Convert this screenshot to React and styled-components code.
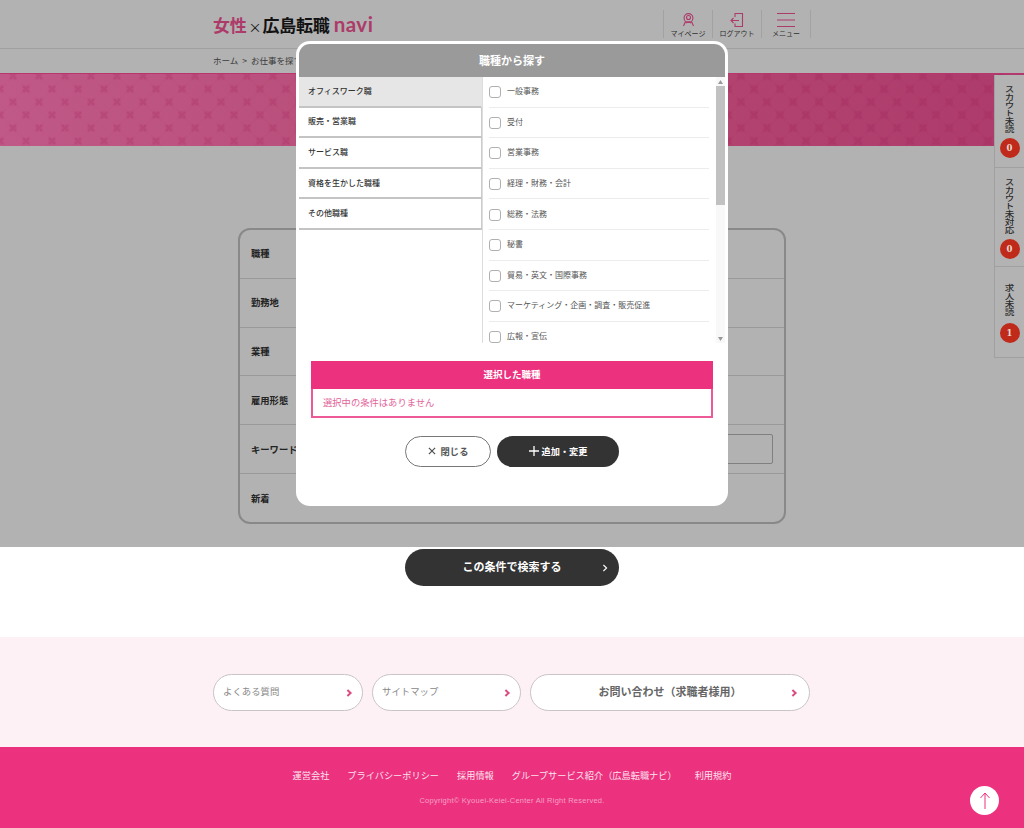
import React from "react";
import styled, { createGlobalStyle } from "styled-components";

const Global = createGlobalStyle`
  html, body { margin: 0; padding: 0; background: #fff; }
  body { font-family: "Noto Sans CJK JP", "Noto Sans", sans-serif; color: #333; }
  * { box-sizing: border-box; }
`;

const Page = styled.div`
  position: relative;
  width: 1024px;
  height: 828px;
  overflow: hidden;
  display: flex;
  flex-direction: column;
`;
const Header = styled.header`
  height: 49px;
  border-bottom: 1px solid #e5e5e5;
  flex: none;
`;
const HeaderInner = styled.div`
  width: 598px;
  height: 48px;
  margin: 0 auto;
  display: flex;
  align-items: center;
  justify-content: space-between;
`;
const Logo = styled.div`
  display: flex;
  align-items: baseline;
  font-weight: 700;
  font-size: 17px;
  letter-spacing: -0.2px;
  color: #1a1a1a;
  margin-top: 1px;
`;
const LogoPink = styled.span`
  color: #f85598;
  font-weight: 700;
`;
const LogoX = styled.span`
  font-weight: 400;
  font-size: 13px;
  margin: 0 1px 0 2px;
`;
const LogoNavi = styled.span`
  color: #f85598;
  font-family: "Lato", sans-serif;
  font-size: 20.5px;
  font-weight: 700;
  letter-spacing: 0.5px;
  margin-left: 4px;
  line-height: 1;
`;
const Nav = styled.nav`
  display: flex;
  height: 28px;
`;
const NavItem = styled.div`
  width: 49px;
  height: 28px;
  border-left: 1px solid #e8e8e8;
  display: flex;
  flex-direction: column;
  align-items: center;
  justify-content: space-between;
  padding-top: 3px;
  font-size: 7px;
  line-height: 9px;
  color: #444;
  &:last-child {
    border-right: 1px solid #e8e8e8;
    width: 50px;
  }
`;
const Crumb = styled.div`
  height: 24px;
  width: 598px;
  margin: 0 auto;
  flex: none;
  display: flex;
  align-items: center;
  gap: 4px;
  font-size: 8.5px;
  color: #555;
  padding-bottom: 2px;
`;
const Hero = styled.div`
  position: relative;
  z-index: 1;
  flex: none;
  height: 73px;
  background: linear-gradient(90deg, #bf5686 0%, #b4456f 50%, #ab3769 100%);
  border-top: 1px solid #b8356e;
  overflow: hidden;
`;
const HeroArt = styled.svg`
  display: block;
  width: 100%;
  height: 100%;
`;
const Main = styled.main`
  flex: none;
  height: 491px;
  display: flex;
  flex-direction: column;
  align-items: center;
  padding-top: 82px;
`;
const FormTable = styled.div`
  width: 548px;
  height: 296px;
  border: 2px solid #c4c4c4;
  border-radius: 12px;
  display: flex;
  flex-direction: column;
  overflow: hidden;
`;
const FormRow = styled.div`
  flex: 1;
  display: flex;
  align-items: center;
  justify-content: space-between;
  padding: 0 11px 1px;
  font-size: 9.3px;
  font-weight: 700;
  color: #333;
  & + & {
    border-top: 1px solid #dcdcdc;
  }
`;
const KeywordInput = styled.div`
  width: 340px;
  height: 30px;
  border: 1px solid #b8b8b8;
  border-radius: 2px;
`;
const SearchButton = styled.div`
  width: 214px;
  height: 37px;
  margin-top: 25px;
  border-radius: 19px;
  background: #333;
  color: #fff;
  font-size: 11px;
  font-weight: 700;
  display: flex;
  align-items: center;
  justify-content: center;
  position: relative;
  padding-bottom: 4px;
`;
const ChevronSlot = styled.span`
  position: absolute;
  right: ${(p) => p.$right || 9}px;
  top: 50%;
  transform: translateY(-50%);
  display: flex;
`;
const LinkBand = styled.section`
  flex: none;
  height: 110px;
  background: #fdf1f6;
  display: flex;
  justify-content: center;
  align-items: flex-start;
  gap: 9px;
  padding: 37px 1px 0 0;
`;
const LinkPill = styled.div`
  position: relative;
  width: ${(p) => p.$w}px;
  height: 37px;
  background: #fff;
  border: 1px solid #c9c4c7;
  border-radius: 19px;
  display: flex;
  align-items: center;
  justify-content: ${(p) => (p.$center ? "center" : "flex-start")};
  padding: 0 ${(p) => (p.$center ? "0" : "9px")} 3px;
  font-size: ${(p) => (p.$center ? "11px" : "9.4px")};
  font-weight: ${(p) => (p.$center ? 700 : 400)};
  color: ${(p) => (p.$center ? "#666" : "#888")};
`;
const Footer = styled.footer`
  flex: 1;
  position: relative;
  background: #ec317f;
  display: flex;
  flex-direction: column;
  align-items: center;
`;
const FooterLinks = styled.div`
  display: flex;
  gap: 18px;
  margin-top: 21px;
  font-size: 9.2px;
  line-height: 14px;
  color: #fbe3ee;
`;
const Copy = styled.div`
  margin-top: 14px;
  font-family: "Liberation Sans", sans-serif;
  font-size: 7.5px;
  line-height: 10px;
  color: #f6a0c5;
  letter-spacing: 0.25px;
`;
const TopButton = styled.div`
  position: absolute;
  right: 25px;
  top: 39px;
  width: 29px;
  height: 29px;
  border-radius: 50%;
  background: #fff;
  display: flex;
  align-items: center;
  justify-content: center;
`;
const Overlay = styled.div`
  position: absolute;
  left: 0;
  top: 0;
  width: 100%;
  height: 547px;
  background: rgba(0, 0, 0, 0.3);
`;
const Modal = styled.div`
  position: absolute;
  z-index: 20;
  left: 296px;
  top: 41px;
  width: 432px;
  height: 465px;
  background: #fff;
  border: 3px solid #fff;
  border-radius: 14px;
  overflow: hidden;
  display: flex;
  flex-direction: column;
`;
const ModalHeader = styled.div`
  flex: none;
  height: 33px;
  background: #9a9a9a;
  color: #fff;
  font-size: 11px;
  font-weight: 700;
  display: flex;
  align-items: center;
  justify-content: center;
  padding-bottom: 2px;
`;
const Columns = styled.div`
  flex: none;
  height: 266px;
  display: flex;
`;
const CatList = styled.div`
  width: 184px;
  flex: none;
  border-right: 1px solid #ddd;
`;
const Cat = styled.div`
  height: 30.6px;
  border-bottom: 2px solid #c4c4c4;
  border-right: 1px solid ${(p) => (p.$active ? "#e6e6e6" : "#ccc")};
  background: ${(p) => (p.$active ? "#e6e6e6" : "#fff")};
  display: flex;
  align-items: center;
  padding: 0 0 2px 9px;
  font-size: 8px;
  font-weight: 500;
  color: #333;
`;
const JobScroll = styled.div`
  flex: 1;
  position: relative;
  overflow: hidden;
  padding-left: 6px;
`;
const Job = styled.div`
  width: 220px;
  height: 30.6px;
  border-bottom: 1px solid #ececec;
  display: flex;
  align-items: center;
  gap: 6px;
  font-size: 8px;
  color: #555;
  &:last-child { border-bottom: none; }
`;
const JobText = styled.span`
  margin-top: -2px;
`;
const Check = styled.span`
  width: 12px;
  height: 12px;
  flex: none;
  border: 1.5px solid #b0b0b0;
  border-radius: 3px;
  background: #fff;
  margin-top: 1px;
`;
const ScrollTrack = styled.div`
  position: absolute;
  right: 0;
  top: 0;
  bottom: 0;
  width: 9px;
  background: #f8f8f8;
  display: flex;
  flex-direction: column;
  align-items: center;
`;
const ScrollBtn = styled.span`
  height: 9px;
  flex: none;
  display: flex;
  align-items: center;
  justify-content: center;
  margin-top: ${(p) => (p.$end ? "auto" : "0")};
`;
const ScrollThumb = styled.span`
  width: 100%;
  height: 119px;
  flex: none;
  background: #c1c1c1;
`;
const Selected = styled.div`
  flex: none;
  margin: 18px 12px 0;
  border: 2px solid #ee5a98;
  height: 57px;
  display: flex;
  flex-direction: column;
`;
const SelectedHead = styled.div`
  height: 28px;
  flex: none;
  margin: -2px -2px 0;
  background: #ec317f;
  color: #fff;
  font-size: 9.5px;
  font-weight: 700;
  display: flex;
  align-items: center;
  justify-content: center;
  padding-bottom: 2px;
`;
const SelectedBody = styled.div`
  flex: 1;
  display: flex;
  align-items: center;
  padding: 0 0 1px 10px;
  font-size: 9.3px;
  color: #e2659a;
`;
const ButtonRow = styled.div`
  flex: none;
  margin-top: 18px;
  display: flex;
  justify-content: center;
  gap: 6px;
`;
const CloseButton = styled.div`
  width: 86px;
  height: 31px;
  border: 1.5px solid #777;
  border-radius: 16px;
  background: #fff;
  color: #555;
  font-size: 9.3px;
  font-weight: 700;
  display: flex;
  align-items: center;
  justify-content: center;
  gap: 5px;
  padding-bottom: 1px;
`;
const AddButton = styled.div`
  width: 122px;
  height: 31px;
  border-radius: 16px;
  background: #333;
  color: #fff;
  font-size: 9.2px;
  font-weight: 700;
  display: flex;
  align-items: center;
  justify-content: center;
  gap: 3px;
  padding-bottom: 1px;
`;
const SideTabs = styled.aside`
  position: absolute;
  z-index: 5;
  right: 0;
  top: 75px;
  width: 30px;
  display: flex;
  flex-direction: column;
  background: #b3b3b3;
  border-left: 1px solid #a0a0a0;
  border-bottom: 1px solid #a0a0a0;
`;
const SideTab = styled.div`
  height: ${(p) => p.$h}px;
  display: flex;
  flex-direction: column;
  align-items: center;
  padding-top: ${(p) => p.$pt}px;
  & + & { border-top: 1px solid #a0a0a0; }
`;
const SideLabel = styled.span`
  writing-mode: vertical-rl;
  font-size: 8px;
  line-height: 11px;
  font-weight: 500;
  color: #2b2b2b;
  height: ${(p) => p.$h}px;
  transform: scaleX(1.2);
`;
const Badge = styled.span`
  width: 20px;
  height: 20px;
  border-radius: 50%;
  background: #bf2a1b;
  color: #e8d8d0;
  font-family: "DejaVu Serif", serif;
  font-size: 8.5px;
  font-weight: 700;
  display: flex;
  align-items: center;
  justify-content: center;
`;

const Chevron = ({ color = "#dc4a82", size = 8, w = 2 }) => (
  <svg width={size} height={size} viewBox="0 0 8 8" fill="none">
    <path d="M2.4 1 L5.6 4 L2.4 7" stroke={color} strokeWidth={w} />
  </svg>
);

const HeroPattern = () => (
  <HeroArt>
    <defs>
      <pattern id="tile" width="26" height="26" patternUnits="userSpaceOnUse" patternTransform="translate(13 2)">
        <circle cx="13" cy="0" r="9" fill="#fff" opacity="0.02" />
        <circle cx="0" cy="13" r="9" fill="#fff" opacity="0.02" />
        <circle cx="26" cy="13" r="9" fill="#fff" opacity="0.02" />
        <circle cx="13" cy="26" r="9" fill="#fff" opacity="0.02" />
        <g stroke="#a02058" strokeWidth="2.6" opacity="0.2">
          <path d="M-3 -3 L3 3 M3 -3 L-3 3" />
          <path d="M23 -3 L29 3 M29 -3 L23 3" />
          <path d="M-3 23 L3 29 M3 23 L-3 29" />
          <path d="M23 23 L29 29 M29 23 L23 29" />
          <path d="M10 10 L16 16 M16 10 L10 16" />
        </g>
      </pattern>
    </defs>
    <rect width="100%" height="100%" fill="url(#tile)" />
  </HeroArt>
);

const categories = ["オフィスワーク職", "販売・営業職", "サービス職", "資格を生かした職種", "その他職種"];
const jobs = ["一般事務", "受付", "営業事務", "経理・財務・会計", "総務・法務", "秘書", "貿易・英文・国際事務", "マーケティング・企画・調査・販売促進", "広報・宣伝"];
const rows = ["職種", "勤務地", "業種", "雇用形態", "キーワード", "新着"];
const footerLinks = ["運営会社", "プライバシーポリシー", "採用情報", "グループサービス紹介（広島転職ナビ）", "利用規約"];

export default function App() {
  return (
    <>
      <Global />
      <Page>
        <Header>
          <HeaderInner>
            <Logo>
              <LogoPink>女性</LogoPink>
              <LogoX>×</LogoX>
              広島転職
              <LogoNavi>navi</LogoNavi>
            </Logo>
            <Nav>
              <NavItem>
                <svg width="13" height="14" viewBox="0 0 13 14" fill="none" stroke="#f85598" strokeWidth="1.1">
                  <circle cx="6.5" cy="5" r="4.4" />
                  <circle cx="6.5" cy="4.5" r="2" />
                  <path d="M3.5 8.5 L1.5 13 M9.5 8.5 L11.5 13 M4 10 C5.5 8.5 7.5 8.5 9 10" />
                </svg>
                マイページ
              </NavItem>
              <NavItem>
                <svg width="14" height="14" viewBox="0 0 14 14" fill="none" stroke="#f85598" strokeWidth="1.1">
                  <path d="M5 4 V0.5 H12.5 V13.5 H5 V10.5" />
                  <path d="M1 7.5 H9 M3.5 5 L1 7.5 L3.5 10" />
                </svg>
                ログアウト
              </NavItem>
              <NavItem>
                <svg width="18" height="14" viewBox="0 0 18 14" fill="none" stroke="#f85598" strokeWidth="1.2">
                  <path d="M0 0.5 H18 M0 7 H18 M0 13.5 H18" />
                </svg>
                メニュー
              </NavItem>
            </Nav>
          </HeaderInner>
        </Header>
        <Crumb>
          <span>ホーム</span>
          <span>&gt;</span>
          <span>お仕事を探す</span>
        </Crumb>
        <Hero>
          <HeroPattern />
        </Hero>
        <Main>
          <FormTable>
            {rows.map((r) => (
              <FormRow key={r}>
                {r}
                {r === "キーワード" && <KeywordInput />}
              </FormRow>
            ))}
          </FormTable>
          <SearchButton>
            この条件で検索する
            <ChevronSlot $right={10}>
              <Chevron color="#fff" w={1.1} />
            </ChevronSlot>
          </SearchButton>
        </Main>
        <LinkBand>
          <LinkPill $w={150}>
            よくある質問
            <ChevronSlot>
              <Chevron />
            </ChevronSlot>
          </LinkPill>
          <LinkPill $w={149}>
            サイトマップ
            <ChevronSlot>
              <Chevron />
            </ChevronSlot>
          </LinkPill>
          <LinkPill $w={280} $center>
            お問い合わせ（求職者様用）
            <ChevronSlot $right={11}>
              <Chevron />
            </ChevronSlot>
          </LinkPill>
        </LinkBand>
        <Footer>
          <FooterLinks>
            {footerLinks.map((l) => (
              <span key={l}>{l}</span>
            ))}
          </FooterLinks>
          <Copy>Copyright© Kyouei-Keiei-Center All Right Reserved.</Copy>
          <TopButton>
            <svg width="12" height="18" viewBox="0 0 12 18" fill="none" stroke="#ec317f" strokeWidth="1">
              <path d="M6 17 V1 M1.5 6 L6 1 L10.5 6" />
            </svg>
          </TopButton>
        </Footer>
        <Overlay />
        <SideTabs>
          <SideTab $h={92} $pt={10}>
            <SideLabel $h={53}>スカウト未読</SideLabel>
            <Badge>0</Badge>
          </SideTab>
          <SideTab $h={99} $pt={10}>
            <SideLabel $h={61}>スカウト未対応</SideLabel>
            <Badge>0</Badge>
          </SideTab>
          <SideTab $h={91} $pt={17}>
            <SideLabel $h={39}>求人未読</SideLabel>
            <Badge>1</Badge>
          </SideTab>
        </SideTabs>
        <Modal>
          <ModalHeader>職種から探す</ModalHeader>
          <Columns>
            <CatList>
              {categories.map((c, i) => (
                <Cat key={c} $active={i === 0}>
                  {c}
                </Cat>
              ))}
            </CatList>
            <JobScroll>
              {jobs.map((j) => (
                <Job key={j}>
                  <Check />
                  <JobText>{j}</JobText>
                </Job>
              ))}
              <ScrollTrack>
                <ScrollBtn>
                  <svg width="5" height="4" viewBox="0 0 5 4"><path d="M2.5 0 L5 4 H0 Z" fill="#999" /></svg>
                </ScrollBtn>
                <ScrollThumb />
                <ScrollBtn $end>
                  <svg width="5" height="4" viewBox="0 0 5 4"><path d="M0 0 H5 L2.5 4 Z" fill="#999" /></svg>
                </ScrollBtn>
              </ScrollTrack>
            </JobScroll>
          </Columns>
          <Selected>
            <SelectedHead>選択した職種</SelectedHead>
            <SelectedBody>選択中の条件はありません</SelectedBody>
          </Selected>
          <ButtonRow>
            <CloseButton>
              <svg width="8" height="8" viewBox="0 0 9 9" fill="none" stroke="#555" strokeWidth="1.4">
                <path d="M1 1 L8 8 M8 1 L1 8" />
              </svg>
              閉じる
            </CloseButton>
            <AddButton>
              <svg width="10" height="10" viewBox="0 0 10 10" fill="none" stroke="#fff" strokeWidth="1.3">
                <path d="M5 0 V10 M0 5 H10" />
              </svg>
              追加・変更
            </AddButton>
          </ButtonRow>
        </Modal>
      </Page>
    </>
  );
}
